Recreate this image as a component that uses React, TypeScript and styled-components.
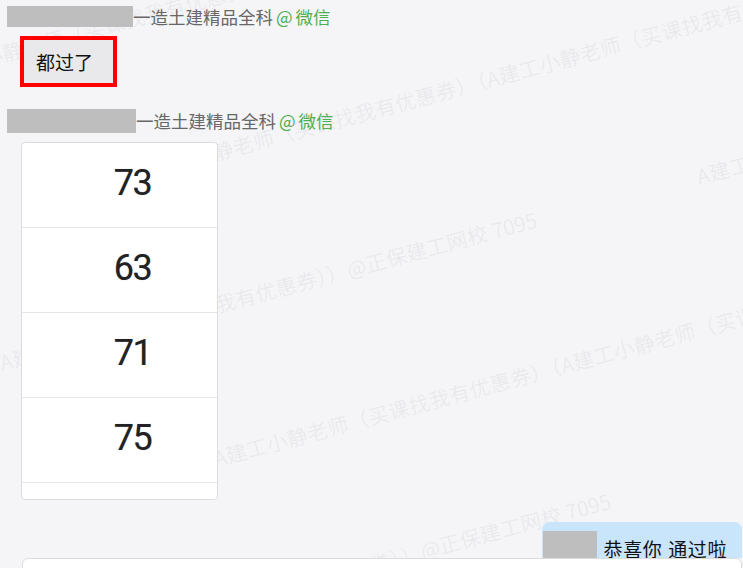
import React from "react";
import styled, { createGlobalStyle } from "styled-components";

const GlobalStyle = createGlobalStyle`
  html, body {
    margin: 0;
    padding: 0;
    background: #f5f5f7;
  }
  body {
    font-family: "Noto Sans CJK SC", "Noto Sans", sans-serif;
  }
`;

const Page = styled.div`
  position: relative;
  width: 743px;
  height: 568px;
  overflow: hidden;
  background: #f5f5f7;
`;

// faint diagonal watermark behind the chat
const Watermark = styled.div`
  position: absolute;
  inset: 0;
  z-index: 0;
  pointer-events: none;
`;

const MarkLine = styled.span`
  position: absolute;
  margin-top: -11px;
  white-space: nowrap;
  font-size: 20.5px;
  font-weight: 300;
  line-height: 22px;
  letter-spacing: 0.5px;
  color: #e7e7eb;
  transform: rotate(-15deg);
  transform-origin: 0 50%;
`;

const Feed = styled.div`
  position: relative;
  z-index: 1;
  display: flex;
  flex-direction: column;
  align-items: flex-start;
  padding-top: 6px;
`;

const SenderRow = styled.div<{ $top: number; $h: number }>`
  display: flex;
  align-items: center;
  height: ${(p) => p.$h}px;
  margin-top: ${(p) => p.$top}px;
  padding-left: 7px;
`;

const Redacted = styled.span<{ $w: number; $h: number }>`
  display: block;
  flex: none;
  width: ${(p) => p.$w}px;
  height: ${(p) => p.$h}px;
  background: #bebebe;
`;

const SenderName = styled.span`
  font-size: 17.5px;
  line-height: 20px;
  color: #676767;
  white-space: nowrap;
`;

const Source = styled.span`
  margin-left: 3px;
  color: #4caf50;
  span {
    margin-left: 3px;
  }
`;

const TextBubble = styled.div`
  display: flex;
  align-items: center;
  height: 43px;
  margin: 9px 0 0 20px;
  padding: 0 20px 0 12px;
  border: 4px solid #ff0000;
  background: #e9e9eb;
  font-size: 19px;
  color: #111;
`;

const ScoreCard = styled.div`
  box-sizing: border-box;
  width: 197px;
  margin: 9px 0 0 21px;
  border: 1px solid #dcdcdc;
  border-radius: 4px;
  background: #fff;
  overflow: hidden;
`;

const ScoreRow = styled.div`
  box-sizing: border-box;
  height: 85px;
  display: flex;
  align-items: center;
  justify-content: center;
  padding: 0 0 4px 26px;
  border-bottom: 1px solid #e6e6e6;
  font-family: Roboto, "Liberation Sans", Arial, sans-serif;
  font-size: 36px;
  font-weight: 400;
  line-height: 36px;
  letter-spacing: -1.5px;
  color: #222;
  text-shadow: 0 0 0.8px rgba(40, 60, 90, 0.5);
`;

const ScoreTail = styled.div`
  height: 16px;
`;

const OutRow = styled.div`
  align-self: stretch;
  display: flex;
  justify-content: flex-end;
  margin-top: 22px;
  padding-right: 1px;
`;

const OutBubble = styled.div`
  display: flex;
  align-items: flex-start;
  height: 36px;
  overflow: hidden;
  padding: 9px 15px 0 1px;
  box-sizing: border-box;
  border-radius: 8px 8px 0 0;
  background: #c9e5fc;
`;

const OutText = styled.span`
  margin-left: 7px;
  font-size: 19px;
  line-height: 36px;
  letter-spacing: 0.6px;
  word-spacing: 1px;
  color: #111;
  white-space: nowrap;
`;

const NextCard = styled.div`
  box-sizing: border-box;
  width: 720px;
  height: 60px;
  margin-left: 22px;
  border: 1px solid #dcdcdc;
  border-radius: 6px 6px 0 0;
  background: #fff;
`;

const marks = [
  { x: -18, y: 58, text: "小静老师（买课找我有优惠券））@正保建工网校 7095" },
  { x: 172, y: 163, text: "工小静老师（买课找我有优惠券）（A建工小静老师（买课找我有优惠券）（A建工" },
  { x: 0, y: 362, text: "A建工小静老师（买课找我有优惠券））@正保建工网校 7095" },
  { x: 697, y: 176, text: "A建工小静老师（买课找我有优惠券）" },
  { x: 214, y: 458, text: "A建工小静老师（买课找我有优惠券）（A建工小静老师（买课找我有优惠券）" },
  { x: 370, y: 564, text: "券））@正保建工网校 7095" },
];

const scores = [73, 63, 71, 75];

const App = (): JSX.Element => {
  return (
    <React.Fragment>
      <GlobalStyle />
      <Page>
        <Watermark>
          {marks.map((m, i) => (
            <MarkLine key={i} style={{ left: m.x, top: m.y }}>
              {m.text}
            </MarkLine>
          ))}
        </Watermark>
        <Feed>
          <SenderRow $top={0} $h={21}>
            <Redacted $w={126} $h={21} />
            <SenderName>
              一造土建精品全科
              <Source>
                @<span>微信</span>
              </Source>
            </SenderName>
          </SenderRow>
          <TextBubble>都过了</TextBubble>
          <SenderRow $top={22} $h={24}>
            <Redacted $w={129} $h={24} />
            <SenderName>
              一造土建精品全科
              <Source>
                @<span>微信</span>
              </Source>
            </SenderName>
          </SenderRow>
          <ScoreCard>
            {scores.map((s) => (
              <ScoreRow key={s}>{s}</ScoreRow>
            ))}
            <ScoreTail />
          </ScoreCard>
          <OutRow>
            <OutBubble>
              <Redacted $w={54} $h={40} />
              <OutText>恭喜你 通过啦</OutText>
            </OutBubble>
          </OutRow>
          <NextCard />
        </Feed>
      </Page>
    </React.Fragment>
  );
};

export default App;
